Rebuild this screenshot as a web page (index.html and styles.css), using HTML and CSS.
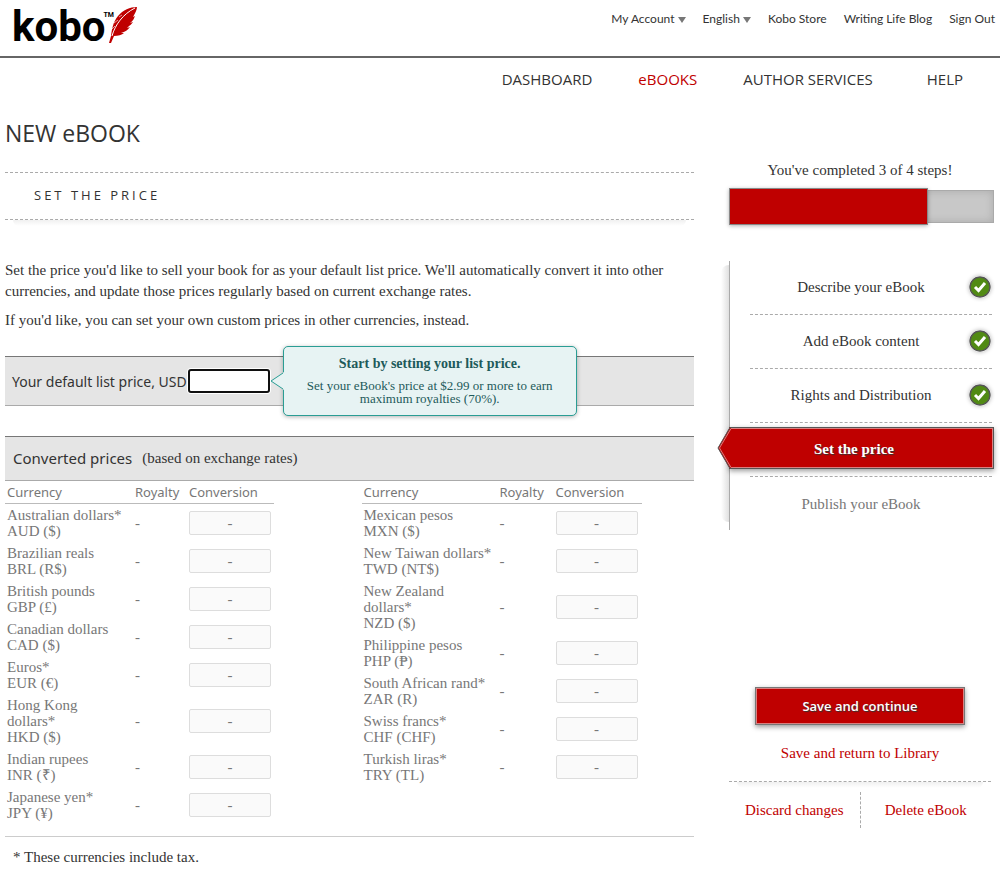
FILE: index.html
```html
<!DOCTYPE html>
<html lang="en">
<head>
    <meta charset="UTF-8">
    <title>Kobo Writing Life - New eBook</title>
    <link rel="stylesheet" href="styles.css">
</head>
<body>
    <header class="top-bar">
        <a class="logo" href="/">
            <span class="logo-name">kobo</span><span class="logo-tm">TM</span>
            <svg class="feather" width="29" height="38" viewBox="0 0 29 38" aria-hidden="true">
                <path fill="#bf0000" d="M28 1C21 1 14 4 9 10C4 16 3 23 2 30L0 37L2 37L5 30C9 30 13 29 15 27L12 27C16 26 19 24 21 21L18 22C21 19 23 18 24 16L21 17C25 14 25 12 26 10L24 11C26 7 28 4 28 1Z"/>
                <path fill="none" stroke="#fff" stroke-width="1" d="M3 30C6 19 14 8 26 2"/>
                <path fill="none" stroke="#fff" stroke-width="0.6" d="M3 23L6 20M5 17L9 14M10 11L13 9"/>
            </svg>
        </a>
        <nav class="account-nav">
            <a href="/account">My Account <span class="arrow"></span></a>
            <a href="/language">English <span class="arrow"></span></a>
            <a href="/store">Kobo Store</a>
            <a href="/blog">Writing Life Blog</a>
            <a href="/signout">Sign Out</a>
        </nav>
    </header>

    <nav class="main-nav">
        <a href="/dashboard">DASHBOARD</a>
        <a class="current" href="/ebooks">eBOOKS</a>
        <a href="/services">AUTHOR SERVICES</a>
        <a class="help" href="/help">HELP</a>
    </nav>

    <div class="page">
        <main>
            <h1>NEW eBOOK</h1>
            <h2 class="section-title">SET THE PRICE</h2>

            <div class="intro">
                <p>Set the price you'd like to sell your book for as your default list price. We'll automatically convert it into other<br>currencies, and update those prices regularly based on current exchange rates.</p>
                <p>If you'd like, you can set your own custom prices in other currencies, instead.</p>
            </div>

            <div class="price-bar">
                <label for="listPrice">Your default list price, USD</label>
                <div class="price-field">
                    <input type="text" id="listPrice">
                    <div class="hint">
                        <svg class="hint-arrow" width="14" height="18" viewBox="0 0 14 18" aria-hidden="true">
                            <path fill="#e7f3f3" d="M14 0L1 9L14 18Z"/>
                            <path fill="none" stroke="#2a9d94" d="M13 1L1 9L13 17"/>
                        </svg>
                        <strong>Start by setting your list price.</strong>
                        <p>Set your eBook's price at $2.99 or more to earn<br>maximum royalties (70%).</p>
                    </div>
                </div>
            </div>

            <div class="converted-bar">
                <h3>Converted prices</h3>
                <span>(based on exchange rates)</span>
            </div>

            <div class="currencies">
                <table>
                    <thead>
                        <tr><th class="currency">Currency</th><th class="royalty">Royalty</th><th class="conversion">Conversion</th></tr>
                    </thead>
                    <tbody>
                        <tr><td>Australian dollars*<br>AUD ($)</td><td>-</td><td><input type="text" value="-" aria-label="AUD price" disabled></td></tr>
                        <tr><td>Brazilian reals<br>BRL (R$)</td><td>-</td><td><input type="text" value="-" aria-label="BRL price" disabled></td></tr>
                        <tr><td>British pounds<br>GBP (£)</td><td>-</td><td><input type="text" value="-" aria-label="GBP price" disabled></td></tr>
                        <tr><td>Canadian dollars<br>CAD ($)</td><td>-</td><td><input type="text" value="-" aria-label="CAD price" disabled></td></tr>
                        <tr><td>Euros*<br>EUR (€)</td><td>-</td><td><input type="text" value="-" aria-label="EUR price" disabled></td></tr>
                        <tr><td>Hong Kong<br>dollars*<br>HKD ($)</td><td>-</td><td><input type="text" value="-" aria-label="HKD price" disabled></td></tr>
                        <tr><td>Indian rupees<br>INR (₹)</td><td>-</td><td><input type="text" value="-" aria-label="INR price" disabled></td></tr>
                        <tr><td>Japanese yen*<br>JPY (¥)</td><td>-</td><td><input type="text" value="-" aria-label="JPY price" disabled></td></tr>
                    </tbody>
                </table>
                <table class="wide">
                    <thead>
                        <tr><th class="currency">Currency</th><th class="royalty">Royalty</th><th class="conversion">Conversion</th></tr>
                    </thead>
                    <tbody>
                        <tr><td>Mexican pesos<br>MXN ($)</td><td>-</td><td><input type="text" value="-" aria-label="MXN price" disabled></td></tr>
                        <tr><td>New Taiwan dollars*<br>TWD (NT$)</td><td>-</td><td><input type="text" value="-" aria-label="TWD price" disabled></td></tr>
                        <tr><td>New Zealand<br>dollars*<br>NZD ($)</td><td>-</td><td><input type="text" value="-" aria-label="NZD price" disabled></td></tr>
                        <tr><td>Philippine pesos<br>PHP (₱)</td><td>-</td><td><input type="text" value="-" aria-label="PHP price" disabled></td></tr>
                        <tr><td>South African rand*<br>ZAR (R)</td><td>-</td><td><input type="text" value="-" aria-label="ZAR price" disabled></td></tr>
                        <tr><td>Swiss francs*<br>CHF (CHF)</td><td>-</td><td><input type="text" value="-" aria-label="CHF price" disabled></td></tr>
                        <tr><td>Turkish liras*<br>TRY (TL)</td><td>-</td><td><input type="text" value="-" aria-label="TRY price" disabled></td></tr>
                    </tbody>
                </table>
            </div>

            <p class="footnote">* These currencies include tax.</p>
        </main>

        <aside>
            <p class="progress-text">You've completed 3 of 4 steps!</p>
            <div class="progress">
                <div class="progress-fill" style="width: 75%"></div>
            </div>

            <ul class="steps">
                <li>
                    <a href="/describe">Describe your eBook</a>
                    <svg class="check" width="22" height="22" viewBox="0 0 22 22" aria-hidden="true"><circle cx="11" cy="11" r="10" fill="#518a14" stroke="#555" stroke-width="1.5"/><path fill="none" stroke="#fff" stroke-width="3" d="M6 11L9.500 14.500L16 7"/></svg>
                </li>
                <li>
                    <a href="/content">Add eBook content</a>
                    <svg class="check" width="22" height="22" viewBox="0 0 22 22" aria-hidden="true"><circle cx="11" cy="11" r="10" fill="#518a14" stroke="#555" stroke-width="1.5"/><path fill="none" stroke="#fff" stroke-width="3" d="M6 11L9.500 14.500L16 7"/></svg>
                </li>
                <li>
                    <a href="/rights">Rights and Distribution</a>
                    <svg class="check" width="22" height="22" viewBox="0 0 22 22" aria-hidden="true"><circle cx="11" cy="11" r="10" fill="#518a14" stroke="#555" stroke-width="1.5"/><path fill="none" stroke="#fff" stroke-width="3" d="M6 11L9.500 14.500L16 7"/></svg>
                </li>
                <li class="active">
                    <a href="/price">
                        <svg class="tip" width="14" height="42" viewBox="0 0 14 42" aria-hidden="true">
                            <path fill="#bf0000" d="M14 0H13L1 21L13 42H14Z"/>
                            <path fill="none" stroke="#d98080" d="M14 1.500L2.500 21L14 40.500"/>
                            <path fill="none" stroke="#555" d="M14 0.500H13L1 21L13 41.500H14"/>
                        </svg>
                        Set the price
                    </a>
                </li>
                <li class="todo">Publish your eBook</li>
            </ul>

            <div class="actions">
                <button type="submit">Save and continue</button>
                <a href="/library">Save and return to Library</a>
            </div>
            <div class="more-actions">
                <a href="/discard">Discard changes</a>
                <a href="/delete">Delete eBook</a>
            </div>
        </aside>
    </div>
</body>
</html>
```
FILE: styles.css
```css
* {
    box-sizing: border-box;
}

body {
    margin: 0;
    background-color: #fff;
    color: #333;
    font-family: Georgia, "Liberation Serif", serif;
    font-size: 15px;
    line-height: 21px;
}

h1, h2, h3, p, ul {
    margin: 0;
    padding: 0;
    font-weight: normal;
}

a {
    color: inherit;
    text-decoration: none;
}

.top-bar {
    display: flex;
    justify-content: space-between;
    height: 58px;
    padding: 0 5px 0 12px;
    border-bottom: 2px solid #666;
}

.logo {
    display: flex;
    align-items: flex-start;
    padding-top: 6px;
    color: #000;
    font-family: "Liberation Sans Narrow", Roboto, sans-serif;
    font-weight: bold;
}

.logo-name {
    font-size: 42px;
    line-height: 42px;
}

.logo-tm {
    margin-left: -2px;
    padding-top: 3px;
    font-size: 7px;
    line-height: 12px;
}

.feather {
    margin-left: -5px;
}

.account-nav {
    display: flex;
    gap: 17px;
    padding-top: 8px;
    font-family: "Trebuchet MS", Lato, sans-serif;
    font-size: 12px;
}

.arrow {
    display: inline-block;
    border-top: 6px solid #777;
    border-left: 4px solid transparent;
    border-right: 4px solid transparent;
}

.main-nav {
    display: flex;
    justify-content: flex-end;
    gap: 46px;
    padding: 11px 37px 0 0;
    font-family: "Trebuchet MS", "Open Sans", sans-serif;
    font-size: 15px;
}

.main-nav .current {
    color: #bf0000;
}

.main-nav .help {
    padding-left: 8px;
}

.page {
    display: grid;
    grid-template-columns: 1fr 265px;
    gap: 35px;
    padding: 28px 6px 0 5px;
}

h1 {
    font-family: "Trebuchet MS", "Open Sans", sans-serif;
    font-size: 23px;
    line-height: 30px;
}

.section-title {
    position: relative;
    margin-top: 24px;
    padding: 12px 29px 13px;
    border-top: 1px dashed #aaa;
    border-bottom: 1px dashed #aaa;
    font-family: "Trebuchet MS", "Open Sans", sans-serif;
    font-size: 13px;
    letter-spacing: 3px;
}

.section-title::after,
.more-actions::before {
    content: "";
    position: absolute;
    left: 8px;
    right: 8px;
    height: 6px;
    background: linear-gradient(#f0f0f0, #fff);
    border-radius: 0 0 12px 12px;
}

.section-title::after {
    top: 47px;
}

.intro {
    padding-top: 40px;
}

.intro p {
    margin-bottom: 8px;
}

.price-bar {
    display: flex;
    align-items: center;
    gap: 1px;
    height: 50px;
    margin-top: 25px;
    padding-left: 7px;
    background-color: #e5e5e5;
    border-top: 1px solid #777;
    border-bottom: 1px solid #aaa;
    font-family: "Trebuchet MS", "Noto Sans", sans-serif;
    font-size: 14px;
}

.price-bar label {
    white-space: nowrap;
}

.price-field {
    position: relative;
    display: flex;
}

.price-field input {
    width: 82px;
    height: 24px;
    border: 2px solid #101010;
    border-radius: 3px;
    background-color: #fff;
    box-shadow: 0 0 0 1px #fff;
}

.hint {
    position: absolute;
    top: -23px;
    left: 95px;
    width: 294px;
    height: 70px;
    padding: 7px 0;
    background-color: #e7f3f3;
    border: 1px solid #2a9d94;
    border-radius: 5px;
    box-shadow: 0 1px 4px rgba(0, 0, 0, 0.3);
    color: #1d5a5a;
    font-family: Georgia, "Liberation Serif", serif;
    font-size: 13px;
    line-height: 13px;
    text-align: center;
    white-space: nowrap;
}

.hint strong {
    display: block;
    margin-bottom: 5px;
    font-size: 14px;
    line-height: 20px;
}

.hint-arrow {
    position: absolute;
    top: 25px;
    left: -14px;
}

.converted-bar {
    display: flex;
    align-items: center;
    gap: 10px;
    height: 45px;
    margin-top: 30px;
    padding-left: 8px;
    background-color: #e5e5e5;
    border-top: 1px solid #777;
    border-bottom: 1px solid #aaa;
}

.converted-bar h3 {
    font-family: "Trebuchet MS", "Noto Sans", sans-serif;
    font-size: 15px;
}

.currencies {
    display: grid;
    grid-template-columns: 1fr 1fr;
    align-items: start;
    justify-items: start;
    gap: 24px;
    padding-bottom: 12px;
    border-bottom: 1px solid #ccc;
    color: #777;
}

table {
    border-collapse: collapse;
    table-layout: fixed;
    width: 269px;
}

.currency {
    width: 128px;
}

.royalty {
    width: 54px;
}

.wide {
    width: 280px;
}

.wide .currency {
    width: 136px;
}

.wide .royalty {
    width: 56px;
}

th {
    padding: 0 2px;
    border-bottom: 1px solid #bbb;
    font-family: "Trebuchet MS", "Noto Sans", sans-serif;
    font-size: 13px;
    font-weight: normal;
    line-height: 22px;
    text-align: left;
    white-space: nowrap;
}

td {
    padding: 3px 2px;
    line-height: 16px;
    white-space: nowrap;
}

td input {
    display: block;
    width: 82px;
    height: 24px;
    border: 1px solid #ddd;
    border-radius: 2px;
    background-color: #fafafa;
    color: #777;
    font-family: inherit;
    font-size: 15px;
    text-align: center;
}

.footnote {
    padding: 10px 8px 0;
}

aside {
    padding-top: 42px;
    text-align: center;
}

.progress-text {
    margin-right: 3px;
}

.progress {
    height: 33px;
    margin-top: 9px;
    background-color: #c8c8c8;
    border: 1px solid #aaa;
    box-shadow: inset 0 0 8px rgba(0, 0, 0, 0.15);
}

.progress-fill {
    box-sizing: content-box;
    height: 35px;
    margin: -3px 0 0 -1px;
    background-color: #bf0000;
    border: 1px solid #888;
    box-shadow: 0 1px 4px rgba(0, 0, 0, 0.3);
}

.steps {
    position: relative;
    height: 269px;
    margin-top: 38px;
    padding: 0 2px 0 20px;
    border-left: 1px solid #aaa;
    list-style: none;
}

.steps::before {
    content: "";
    position: absolute;
    top: 4px;
    bottom: 8px;
    left: -9px;
    width: 8px;
    background: linear-gradient(to left, #e0e0e0, #fff);
    border-radius: 8px 0 0 8px;
}

.steps li {
    position: relative;
    display: flex;
    align-items: center;
    justify-content: center;
    height: 54px;
    padding-right: 20px;
    border-bottom: 1px dashed #aaa;
}

.steps li.todo {
    border-bottom: none;
    color: #777;
}

.check {
    position: absolute;
    top: 15px;
    right: 1px;
    border-radius: 50%;
    box-shadow: 0 0 4px rgba(0, 0, 0, 0.3);
}

.steps li.active {
    padding: 0 0 3px;
}

.active a {
    position: relative;
    flex: 1;
    height: 42px;
    margin: 0 -2px 0 -21px;
    padding-right: 14px;
    background-color: #bf0000;
    border: 1px solid #555;
    border-left: none;
    box-shadow: inset 0 0 0 1px #d98080, 0 2px 5px rgba(0, 0, 0, 0.4);
    color: #fff;
    font-weight: bold;
    line-height: 42px;
    text-shadow: 1px 1px 1px #333;
}

.tip {
    position: absolute;
    top: -1px;
    left: -12px;
}

.actions {
    display: flex;
    flex-direction: column;
    align-items: center;
    gap: 18px;
    margin: 157px 3px 0 0;
    padding-bottom: 17px;
    color: #bf0000;
}

button {
    width: 210px;
    height: 38px;
    padding: 0;
    background-color: #bf0000;
    border: 1px solid #777;
    box-shadow: inset 0 0 0 1px #d98080, 0 2px 5px rgba(0, 0, 0, 0.4);
    color: #fff;
    font-family: "Trebuchet MS", "Open Sans", sans-serif;
    font-size: 13px;
    font-weight: 600;
    text-shadow: 1px 1px 1px #333;
}

.more-actions {
    position: relative;
    display: flex;
    margin-right: 3px;
    border-top: 1px dashed #aaa;
    padding-top: 10px;
    color: #bf0000;
}

.more-actions::before {
    top: 0;
}

.more-actions a {
    flex: 1;
    line-height: 36px;
}

.more-actions a + a {
    border-left: 1px dashed #aaa;
}
```
